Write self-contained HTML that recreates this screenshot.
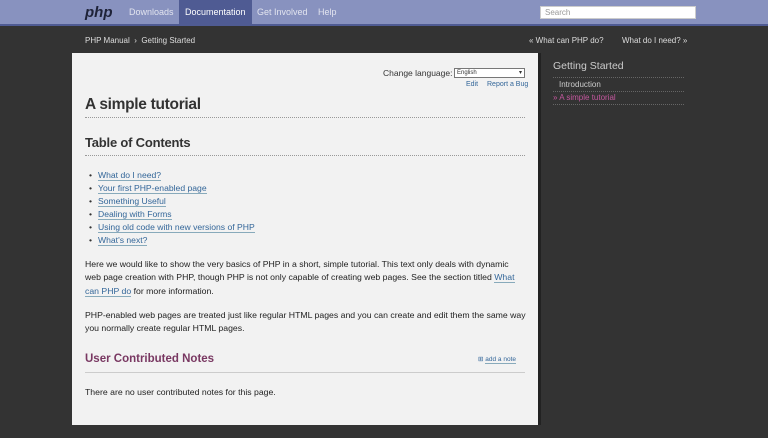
<!DOCTYPE html>
<html><head><meta charset="utf-8"><style>
*{margin:0;padding:0;box-sizing:border-box}
body{width:768px;height:438px;background:#333;font-family:"Liberation Sans",sans-serif;overflow:hidden;position:relative;color:#333}
.nav{position:absolute;left:0;top:0;width:768px;height:26px;background:#8892bf;border-bottom:2px solid #4f5b93}
.nav .logo{position:absolute;left:85px;top:4px;font:italic bold 15px "Liberation Sans",sans-serif;color:#1e2238}
.nav a{position:absolute;top:0;height:24px;line-height:24px;font-size:9px;color:#e2e4ef;text-decoration:none}
.nav .act{background:#4f5b93;color:#fff;padding:0 6px}
.search{position:absolute;left:540px;top:6px;width:156px;height:13px;background:#fff;border:1px solid #ccc;font-size:8px;color:#999;padding-left:4px;line-height:11px}
.crumb{position:absolute;top:36px;font-size:8px;color:#ddd}
.panel{position:absolute;left:72px;top:53px;width:469px;height:372px;background:#f2f2f2;border-right:3px solid #222}
.abs{position:absolute}
.link{color:#369;border-bottom:1px solid #8ab}
h1{position:absolute;left:13px;top:43px;font-size:15.5px;font-weight:bold;color:#333;letter-spacing:-0.3px}
.rule{position:absolute;left:13px;width:440px;border-top:1px dotted #999}
h2{position:absolute;left:13px;top:82px;font-size:13px;font-weight:bold;color:#333;letter-spacing:-0.2px}
ul{position:absolute;left:17px;top:116px;list-style:none;font-size:8.6px;line-height:13px}
ul li:before{content:"•";color:#333;margin-right:6px}
p{position:absolute;left:13px;font-size:8.7px;line-height:13.3px;color:#222;white-space:nowrap}
.side{position:absolute;left:553px;width:131px}
</style></head><body>
<div class="nav">
<div class="logo">php</div>
<a style="left:129px">Downloads</a>
<a class="act" style="left:179px">Documentation</a>
<a style="left:257px">Get Involved</a>
<a style="left:318px">Help</a>
<div class="search">Search</div>
</div>
<div class="crumb" style="left:85px">PHP Manual &nbsp;›&nbsp; Getting Started</div>
<div class="crumb" style="left:529px">« What can PHP do?</div>
<div class="crumb" style="left:622px">What do I need? »</div>
<div class="panel">
<div class="abs" style="left:311px;top:15px;font-size:8.5px;color:#333">Change language:</div>
<div class="abs" style="left:382px;top:15px;width:71px;height:10px;background:#fff;border:1px solid #777;font-size:6px;line-height:8px;padding-left:2px">English<span style="float:right;margin-right:2px">▾</span></div>
<div class="abs" style="left:394px;top:28px;font-size:7px;color:#369">Edit</div>
<div class="abs" style="left:415px;top:28px;font-size:7px;color:#369">Report a Bug</div>
<h1>A simple tutorial</h1>
<div class="rule" style="top:64px"></div>
<h2>Table of Contents</h2>
<div class="rule" style="top:102px"></div>
<ul>
<li><span class="link">What do I need?</span></li>
<li><span class="link">Your first PHP-enabled page</span></li>
<li><span class="link">Something Useful</span></li>
<li><span class="link">Dealing with Forms</span></li>
<li><span class="link">Using old code with new versions of PHP</span></li>
<li><span class="link">What's next?</span></li>
</ul>
<p style="top:205px">Here we would like to show the very basics of PHP in a short, simple tutorial. This text only deals with dynamic<br>web page creation with PHP, though PHP is not only capable of creating web pages. See the section titled <span class="link">What</span><br><span class="link">can PHP do</span> for more information.</p>
<p style="top:256px">PHP-enabled web pages are treated just like regular HTML pages and you can create and edit them the same way<br>you normally create regular HTML pages.</p>
<div class="abs" style="left:13px;top:300px;font-size:11.5px;font-weight:bold;color:#793862">User Contributed Notes</div>
<div class="abs" style="left:406px;top:302px;font-size:6.5px;color:#369">⊞ <span class="link">add a note</span></div>
<div class="abs" style="left:13px;top:319px;width:440px;border-top:1px solid #ccc"></div>
<p style="top:333px">There are no user contributed notes for this page.</p>
</div>
<div class="side" style="top:60px;font-size:10.5px;color:#ccc">Getting Started</div>
<div class="side" style="top:77px;border-top:1px dotted #666"></div>
<div class="side" style="top:80px;font-size:8px;color:#ccc;padding-left:6px">Introduction</div>
<div class="side" style="top:91px;border-top:1px dotted #666"></div>
<div class="side" style="top:93px;font-size:8px;color:#c4579e">» A simple tutorial</div>
<div class="side" style="top:104px;border-top:1px dotted #666"></div>
</body></html>
